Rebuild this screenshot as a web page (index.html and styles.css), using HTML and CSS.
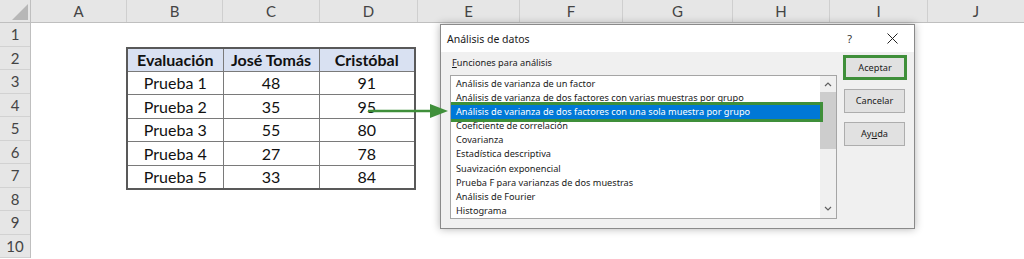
FILE: index.html
```html
<!DOCTYPE html>
<html lang="es">
<head>
    <meta charset="UTF-8">
    <title>Análisis de datos</title>
    <link rel="stylesheet" href="styles.css">
</head>
<body>
    <div class="sheet">
        <div class="col-heads">
            <div class="corner"><span class="corner-tri"></span></div>
            <div class="col-head w96">A</div>
            <div class="col-head w96">B</div>
            <div class="col-head w97">C</div>
            <div class="col-head w98">D</div>
            <div class="col-head w102">E</div>
            <div class="col-head w103">F</div>
            <div class="col-head w110">G</div>
            <div class="col-head w97">H</div>
            <div class="col-head w98">I</div>
            <div class="col-head last">J</div>
        </div>
        <div class="sheet-body">
            <div class="row-heads">
                <div class="row-head">1</div>
                <div class="row-head">2</div>
                <div class="row-head">3</div>
                <div class="row-head">4</div>
                <div class="row-head">5</div>
                <div class="row-head">6</div>
                <div class="row-head">7</div>
                <div class="row-head">8</div>
                <div class="row-head">9</div>
                <div class="row-head">10</div>
            </div>
            <div class="cells">
                <table class="data">
                    <tr class="head">
                        <th>Evaluación</th>
                        <th>José Tomás</th>
                        <th>Cristóbal</th>
                    </tr>
                    <tr><td>Prueba 1</td><td>48</td><td>91</td></tr>
                    <tr><td>Prueba 2</td><td>35</td><td>95</td></tr>
                    <tr><td>Prueba 3</td><td>55</td><td>80</td></tr>
                    <tr><td>Prueba 4</td><td>27</td><td>78</td></tr>
                    <tr><td>Prueba 5</td><td>33</td><td>84</td></tr>
                </table>
            </div>
        </div>
    </div>

    <div class="dialog">
        <div class="dialog-title">
            <span class="title-text">Análisis de datos</span>
            <span class="title-help">?</span>
            <span class="title-close">
                <svg width="11" height="11" viewBox="0 0 11 11"><path d="M0.5 0.5 L10.5 10.5 M10.5 0.5 L0.5 10.5" stroke="#222" stroke-width="1" fill="none"/></svg>
            </span>
        </div>
        <div class="dialog-body">
            <div class="list-col">
                <div class="list-label"><u>F</u>unciones para análisis</div>
                <div class="listbox">
                    <div class="items">
                        <div class="item">Análisis de varianza de un factor</div>
                        <div class="item">Análisis de varianza de dos factores con varias muestras por grupo</div>
                        <div class="item selected">Análisis de varianza de dos factores con una sola muestra por grupo</div>
                        <div class="item">Coeficiente de correlación</div>
                        <div class="item">Covarianza</div>
                        <div class="item">Estadística descriptiva</div>
                        <div class="item">Suavización exponencial</div>
                        <div class="item">Prueba F para varianzas de dos muestras</div>
                        <div class="item">Análisis de Fourier</div>
                        <div class="item">Histograma</div>
                    </div>
                    <div class="scrollbar">
                        <svg class="arrow-up" width="8" height="6" viewBox="0 0 8 6"><path d="M1 5 L4 2 L7 5" stroke="#606060" stroke-width="1.2" fill="none"/></svg>
                        <div class="thumb"></div>
                        <svg class="arrow-down" width="8" height="6" viewBox="0 0 8 6"><path d="M1 1 L4 4 L7 1" stroke="#606060" stroke-width="1.2" fill="none"/></svg>
                    </div>
                </div>
            </div>
            <div class="buttons">
                <div class="btn default">Aceptar</div>
                <div class="btn">Cancelar</div>
                <div class="btn">Ay<u>u</u>da</div>
            </div>
        </div>
    </div>

    <svg class="pointer" width="84" height="16" viewBox="0 0 84 16">
        <line x1="0" y1="8" x2="66" y2="8" stroke="#3f8f3a" stroke-width="2.5"/>
        <polygon points="62,1 80,8 62,15" fill="#3f8f3a"/>
    </svg>
</body>
</html>
```

FILE: styles.css
```css
body {
    margin: 0;
    background: #fff;
    font-family: 'Lato', 'Liberation Sans', sans-serif;
    width: 1024px;
    height: 259px;
    overflow: hidden;
    position: relative;
}
.col-heads {
    display: flex;
    height: 23px;
    background: #e6e6e6;
    border-bottom: 1px solid #bfbfbf;
    box-sizing: border-box;
}
.corner {
    width: 31px;
    flex: none;
    border-right: 1px solid #bfbfbf;
    box-sizing: border-box;
    position: relative;
}
.corner-tri {
    position: absolute;
    right: 2px;
    bottom: 2px;
    width: 0;
    height: 0;
    border-left: 16px solid transparent;
    border-bottom: 16px solid #b7b7b7;
}
.col-head {
    flex: none;
    box-sizing: border-box;
    border-right: 1px solid #cfcfcf;
    text-align: center;
    font-size: 15px;
    line-height: 22px;
    color: #444;
}
.col-head.last {
    flex: 1;
    border-right: none;
}
.w96 { width: 96px; }
.w97 { width: 97px; }
.w98 { width: 98px; }
.w102 { width: 102px; }
.w103 { width: 103px; }
.w110 { width: 110px; }
.sheet-body {
    display: flex;
}
.row-heads {
    width: 31px;
    flex: none;
    background: #e6e6e6;
    border-right: 1px solid #bfbfbf;
    box-sizing: border-box;
}
.row-head {
    height: 23.5px;
    box-sizing: border-box;
    border-bottom: 1px solid #d2d2d2;
    text-align: center;
    font-size: 15px;
    line-height: 23px;
    color: #444;
}
.cells {
    padding-left: 95px;
    padding-top: 23.5px;
}
.data {
    border-collapse: collapse;
    table-layout: fixed;
    border: 2px solid #595959;
    font-size: 16px;
    color: #111;
}
.data th, .data td {
    width: 96px;
    height: 23.5px;
    padding: 0;
    border: 1px solid #7a7a7a;
    text-align: center;
    box-sizing: border-box;
}
.data tr.head {
    background: #d9e1f2;
}
.data th {
    font-weight: bold;
}
.data tr:last-child td {
    border-bottom: 2px solid #595959;
}

.dialog {
    position: absolute;
    left: 440px;
    top: 24px;
    width: 475px;
    height: 205px;
    box-sizing: border-box;
    border: 1px solid #8a8a8a;
    background: #f0f0f0;
    box-shadow: 0 0 8px rgba(0,0,0,0.3);
    font-family: 'Noto Sans', 'Open Sans', sans-serif;
    color: #1a1a1a;
}
.dialog-title {
    height: 27px;
    background: #fff;
    display: flex;
    align-items: center;
    font-size: 10.5px;
}
.title-text {
    flex: 1;
    padding-left: 6px;
}
.title-help {
    font-size: 11px;
    color: #333;
    margin-right: 35px;
}
.title-close {
    display: flex;
    margin-right: 16px;
}
.dialog-body {
    display: flex;
    gap: 6px;
    padding: 3px 0 0 9px;
}
.list-col {
    width: 387px;
}
.list-label {
    font-size: 9.2px;
    height: 16px;
    line-height: 16px;
    padding-left: 2px;
}
.listbox {
    margin-top: 4px;
    height: 144px;
    box-sizing: border-box;
    border: 1px solid #a5a5a5;
    background: #fff;
    display: flex;
    overflow: hidden;
}
.items {
    flex: 1;
    padding-top: 1px;
}
.item {
    height: 14.1px;
    line-height: 14px;
    font-size: 9.2px;
    padding-left: 5px;
    white-space: nowrap;
    overflow: hidden;
}
.item.selected {
    background: #0078d7;
    color: #fff;
    outline: 3px solid #3f8f3a;
    position: relative;
}
.scrollbar {
    width: 16px;
    flex: none;
    background: #f0f0f0;
    display: flex;
    flex-direction: column;
    align-items: center;
}
.arrow-up {
    margin-top: 5px;
}
.thumb {
    width: 16px;
    height: 57px;
    margin-top: 5px;
    background: #cdcdcd;
}
.arrow-down {
    margin-top: auto;
    margin-bottom: 6px;
}
.buttons {
    display: flex;
    flex-direction: column;
    gap: 7px;
    width: 64px;
}
.btn {
    width: 61px;
    height: 24px;
    box-sizing: border-box;
    border: 1px solid #adadad;
    background: #e1e1e1;
    font-size: 9.2px;
    line-height: 22px;
    text-align: center;
    margin-left: 1px;
}
.btn + .btn {
    margin-top: 2px;
}
.btn.default {
    width: 64px;
    height: 25px;
    margin-left: 0;
    border: 3px solid #3f8f3a;
    line-height: 19px;
}

.pointer {
    position: absolute;
    left: 368px;
    top: 103px;
}
```
